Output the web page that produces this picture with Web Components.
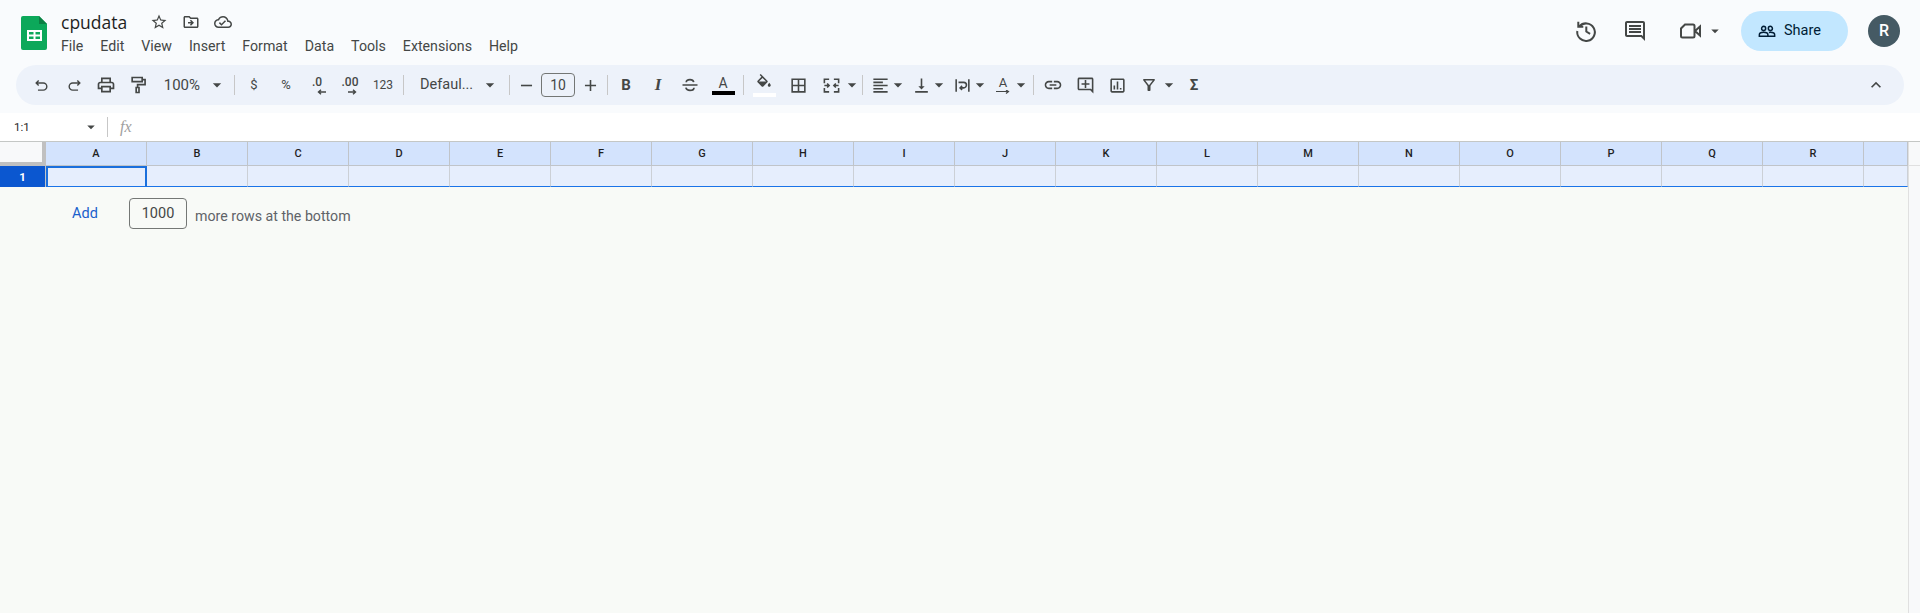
<!DOCTYPE html>
<html>
<head>
<meta charset="utf-8">
<title>cpudata</title>
<style>
html, body { margin: 0; height: 100%; overflow: hidden; }
body { background: #f9fbfd; font-family: Roboto, "Liberation Sans", sans-serif; color: #444746; display: flex; flex-direction: column; }
</style>
</head>
<body>
<gs-header title-text="cpudata">
  <gs-menu ml="0">File</gs-menu>
  <gs-menu>Edit</gs-menu>
  <gs-menu>View</gs-menu>
  <gs-menu>Insert</gs-menu>
  <gs-menu>Format</gs-menu>
  <gs-menu>Data</gs-menu>
  <gs-menu>Tools</gs-menu>
  <gs-menu>Extensions</gs-menu>
  <gs-menu>Help</gs-menu>
</gs-header>

<gs-toolbar>
  <gs-tool w="32" icon="undo" size="17"></gs-tool>
  <gs-tool w="32" ml="1" icon="redo" size="17"></gs-tool>
  <gs-tool w="32" icon="print" size="20"></gs-tool>
  <gs-tool w="32" icon="paint" size="20"></gs-tool>
  <gs-tool w="54" fs="15" align="end">100%</gs-tool>
  <gs-tool w="18" icon="caret" size="20"></gs-tool>
  <gs-sep ml="8"></gs-sep>
  <gs-tool w="24" ml="7" fs="13">$</gs-tool>
  <gs-tool w="24" ml="8" fs="13">%</gs-tool>
  <gs-tool w="24" ml="7" fs="12" weight="500" arrow="left">.0</gs-tool>
  <gs-tool w="24" ml="9" fs="12" weight="500" arrow="right">.00</gs-tool>
  <gs-tool w="28" ml="7" fs="12">123</gs-tool>
  <gs-sep ml="6"></gs-sep>
  <gs-tool w="67" ml="9" fs="14.500" align="start" pad="7">Defaul...</gs-tool>
  <gs-tool w="18" ml="1" icon="caret" size="20"></gs-tool>
  <gs-sep ml="10"></gs-sep>
  <gs-tool w="16" ml="8" icon="minus" size="19"></gs-tool>
  <gs-font-size ml="7">10</gs-font-size>
  <gs-tool w="16" ml="7" icon="plus" size="19"></gs-tool>
  <gs-sep ml="9"></gs-sep>
  <gs-tool w="24" ml="6" fs="15" weight="700">B</gs-tool>
  <gs-tool w="24" ml="8" fs="17" weight="700" italic serif>I</gs-tool>
  <gs-tool w="24" ml="8" icon="strike" size="20"></gs-tool>
  <gs-tool w="24" ml="9" fs="14" bar="#000">A</gs-tool>
  <gs-sep ml="8"></gs-sep>
  <gs-tool w="24" ml="8" icon="fill" size="18" bar="#fff"></gs-tool>
  <gs-tool w="24" ml="10" icon="borders" size="19"></gs-tool>
  <gs-tool w="24" ml="9" icon="merge" size="19"></gs-tool>
  <gs-tool w="16" ml="1" icon="caret" size="20"></gs-tool>
  <gs-sep ml="2"></gs-sep>
  <gs-tool w="24" ml="5" icon="align" size="19"></gs-tool>
  <gs-tool w="12" icon="caret" size="20"></gs-tool>
  <gs-tool w="24" ml="5" icon="valign" size="19"></gs-tool>
  <gs-tool w="12" icon="caret" size="20"></gs-tool>
  <gs-tool w="24" ml="5" icon="wrap" size="19"></gs-tool>
  <gs-tool w="12" icon="caret" size="20"></gs-tool>
  <gs-tool w="24" ml="5" fs="13" arrow="under">A</gs-tool>
  <gs-tool w="12" icon="caret" size="20"></gs-tool>
  <gs-sep ml="6"></gs-sep>
  <gs-tool w="24" ml="7" icon="link" size="20"></gs-tool>
  <gs-tool w="24" ml="8" icon="addcomment" size="19"></gs-tool>
  <gs-tool w="24" ml="8" icon="chart" size="19"></gs-tool>
  <gs-tool w="24" ml="8" icon="filter" size="18"></gs-tool>
  <gs-tool w="12" ml="2" icon="caret" size="20"></gs-tool>
  <gs-tool w="24" ml="7" fs="15" weight="700">&Sigma;</gs-tool>
  <gs-tool w="24" slot="end" icon="chevron" size="20"></gs-tool>
</gs-toolbar>

<gs-formula-bar>1:1</gs-formula-bar>
<gs-grid columns="A B C D E F G H I J K L M N O P Q R"></gs-grid>
<gs-add-rows count="1000">more rows at the bottom</gs-add-rows>

<script>
// Material style paths, 24x24 box. "s:" prefix means stroked instead of filled.
const ICONS = {
  undo: 's:M8 5 4.5 8.5 8 12M4.5 8.5H14.5a5 5 0 0 1 0 10H7',
  redo: 's:M16 5l3.5 3.5L16 12M19.5 8.5H9.5a5 5 0 0 0 0 10H17',
  print: 'M19 8h-1V3H6v5H5c-1.66 0-3 1.34-3 3v6h4v4h12v-4h4v-6c0-1.66-1.34-3-3-3zM8 5h8v3H8V5zm8 12v2H8v-4h8v2zm2-2v-2H6v2H4v-4c0-.55.45-1 1-1h14c.55 0 1 .45 1 1v4h-2z',
  paint: 's:M5 3h12v5H5zM17 5.5h3.5v6H11.5V15M9.8 15h3.4v6H9.8z',
  caret: 'M7 10l5 5 5-5z',
  minus: 'M5 11h14v2H5z',
  plus: 'M19 13h-6v6h-2v-6H5v-2h6V5h2v6h6v2z',
  strike: 's:M3 12h18M16.5 8.5C16 6.5 14.3 5.5 12 5.5S7.5 6.8 7.5 8.7M16.8 15.3c0 2-2.1 3.2-4.8 3.2s-4.500-1.200-5-3.300',
  fill: 'M16.56 8.94L7.62 0 6.21 1.41l2.38 2.38-5.15 5.15c-.59.59-.59 1.54 0 2.12l5.5 5.5c.29.29.68.44 1.06.44s.77-.15 1.06-.44l5.5-5.5c.59-.58.59-1.53 0-2.12zM5.21 10L10 5.21 14.79 10H5.21zM19 11.500s-2 2.170-2 3.500c0 1.100.9 2 2 2s2-.9 2-2c0-1.330-2-3.500-2-3.500z',
  borders: 'M3 3v18h18V3H3zm8 16H5v-6h6v6zm0-8H5V5h6v6zm8 8h-6v-6h6v6zm0-8h-6V5h6v6z',
  merge: 's:M3 9V4h6M15 4h6v5M21 15v5h-6M9 20H3v-5M3 12h6M6.500 9.500 9 12l-2.500 2.500M21 12h-6M17.500 9.500 15 12l2.500 2.500',
  align: 'M3 3h18v2H3zM3 7h12v2H3zM3 11h18v2H3zM3 15h12v2H3zM3 19h18v2H3z',
  valign: 'M16 13h-3V3h-2v10H8l4 4 4-4zM4 19v2h16v-2H4z',
  wrap: 's:M4 4v16M20 4v16M7 8h6.500a3.500 3.500 0 0 1 0 7H9M11.500 12.500 9 15l2.500 2.500',
  link: 'M3.900 12c0-1.710 1.390-3.100 3.100-3.100h4V7H7c-2.760 0-5 2.240-5 5s2.240 5 5 5h4v-1.900H7c-1.710 0-3.100-1.390-3.100-3.100zM8 13h8v-2H8v2zm9-6h-4v1.900h4c1.710 0 3.100 1.390 3.100 3.100s-1.390 3.100-3.100 3.100h-4V17h4c2.760 0 5-2.240 5-5s-2.240-5-5-5z',
  addcomment: 'M22 4c0-1.100-.9-2-2-2H4c-1.100 0-2 .9-2 2v12c0 1.100.9 2 2 2h14l4 4V4zm-2 13.170L18.830 16H4V4h16v13.170zM13 5h-2v4H7v2h4v4h2v-4h4V9h-4z',
  chart: 'M19 3H5c-1.100 0-2 .9-2 2v14c0 1.100.9 2 2 2h14c1.100 0 2-.9 2-2V5c0-1.100-.9-2-2-2zm0 16H5V5h14v14zM7 12h2v5H7zm4-5h2v10h-2zm4 8h2v2h-2z',
  filter: 'M7 6h10l-5.010 6.300L7 6zm-2.750-.39C6.270 8.200 10 13 10 13v6c0 .55.45 1 1 1h2c.55 0 1-.45 1-1v-6s3.720-4.800 5.740-7.390A.998.998 0 0 0 18.950 4H5.040a1 1 0 0 0-.79 1.610z',
  chevron: 'M7.410 15.410L12 10.830l4.590 4.580L18 14l-6-6-6 6z',
  star: 'M22 9.240l-7.190-.62L12 2 9.190 8.630 2 9.240l5.460 4.730L5.820 21 12 17.270 18.180 21l-1.630-7.030L22 9.240zM12 15.400l-3.760 2.270 1-4.280-3.320-2.880 4.380-.38L12 6.100l1.710 4.040 4.380.38-3.320 2.880 1 4.280L12 15.400z',
  move: 'M20 6h-8l-2-2H4c-1.100 0-2 .9-2 2v12c0 1.100.9 2 2 2h16c1.100 0 2-.9 2-2V8c0-1.100-.9-2-2-2zm0 12H4V6h5.170l2 2H20v10zm-8.010-9l-1.410 1.410L12.160 12H8v2h4.160l-1.590 1.590L11.990 17 16 13.010 11.990 9z',
  cloud: 'M19.350 10.040C18.670 6.590 15.640 4 12 4 9.110 4 6.600 5.640 5.350 8.040 2.340 8.360 0 10.910 0 14c0 3.310 2.690 6 6 6h13c2.760 0 5-2.240 5-5 0-2.640-2.050-4.780-4.650-4.960zM19 18H6c-2.210 0-4-1.790-4-4 0-2.050 1.530-3.760 3.560-3.970l1.070-.11.5-.95C8.080 7.140 9.940 6 12 6c2.620 0 4.880 1.860 5.390 4.430l.3 1.500 1.530.11c1.560.1 2.780 1.410 2.780 2.960 0 1.650-1.350 3-3 3zm-9-3.820l-2.090-2.090L6.500 13.500 10 17l6.010-6.010-1.410-1.410z',
  history: 's:M5.300 7.500A8.800 8.800 0 1 1 3.300 12M4.300 2.800v5h5M12.300 7.500v5l3.800 2.300',
  comment: 'M21.990 4c0-1.100-.89-2-1.990-2H4c-1.100 0-2 .9-2 2v12c0 1.100.9 2 2 2h14l4 4-.01-18zM20 4v13.170L18.830 16H4V4h16zM6 12h12v2H6zm0-3h12v2H6zm0-3h12v2H6z',
  meet: 's:M7 5.500H15a1.500 1.500 0 0 1 1.500 1.500V17a1.500 1.500 0 0 1-1.500 1.500H4.500A1.500 1.500 0 0 1 3 17V9.500zM17 12l5-4.500v9z',
  people: 's:M1.800 19v-2c0-2 3-3.200 5.700-3.200s5.700 1.200 5.700 3.200v2zM14.500 14c.6-.2 1.300-.2 2-.2 2.700 0 5.700 1.200 5.700 3.200v2h-9M7.500 5.800a2.700 2.700 0 1 0 0 5.400 2.700 2.700 0 0 0 0-5.400zM16.500 5.800a2.700 2.700 0 1 1 0 5.400 2.700 2.700 0 0 1 0-5.400z'
};

function svg(name, size, color) {
  let d = ICONS[name];
  const stroked = d.startsWith('s:');
  if (stroked) d = d.slice(2);
  const paint = stroked
    ? `fill="none" stroke="${color}" stroke-width="2"`
    : `fill="${color}"`;
  return `<svg width="${size}" height="${size}" viewBox="0 0 24 24" style="display:block;flex:none"><path d="${d}" ${paint}/></svg>`;
}

class GsMenu extends HTMLElement {
  constructor() {
    super();
    this.attachShadow({mode: 'open'}).innerHTML = `
<style>
:host { display: block; font-size: 14.200px; line-height: 20px; color: #444746; margin-left: 17px; }
:host([ml="0"]) { margin-left: 0; }
</style><slot></slot>`;
  }
}

class GsHeader extends HTMLElement {
  constructor() {
    super();
    const root = this.attachShadow({mode: 'open'});
    root.innerHTML = `
<style>
:host { display: flex; height: 65px; flex: none; padding-left: 21px; box-sizing: border-box; }
.logo { margin-top: 16px; flex: none; }
.doc { margin-left: 14px; padding-top: 10px; }
.title-row { display: flex; align-items: center; height: 24px; }
.title { font-family: "Open Sans", Roboto, sans-serif; font-size: 17.500px; color: #1f1f1f; line-height: 24px; width: 66px; white-space: nowrap; }
.ic { margin-left: 23px; }
.ic + .ic { margin-left: 14px; }
.menu { display: flex; margin-top: 2px; }
.right { margin-left: auto; display: flex; align-items: center; height: 61px; padding-right: 20px; }
.share { display: flex; align-items: center; width: 107px; height: 40px; margin-left: 17px; box-sizing: border-box; padding-left: 17px;
  background: #c2e7ff; border-radius: 20px; color: #001d35; font-size: 14.500px; gap: 8px; }
.avatar { width: 32px; height: 32px; margin-left: 20px; border-radius: 50%; background: #455a64; color: #fff; display: flex; align-items: center; justify-content: center; font-size: 16px; font-weight: 500; }
.h1 { margin-right: 25px; }
.h2 { margin-right: 31px; }
.m2 { margin-left: 4px; }
</style>
<svg class="logo" width="26" height="34" viewBox="0 0 26 34">
  <path d="M2 0h16l8 8v24a2 2 0 0 1-2 2H2a2 2 0 0 1-2-2V2a2 2 0 0 1 2-2z" fill="#0ca85a"/>
  <path d="M18 0l8 8h-8z" fill="#0b8043"/>
  <path d="M6 14h15v11H6z M8 16v2.500h4.500V16z M14.500 16v2.500H19V16z M8 20.500V23h4.500v-2.500z M14.500 20.500V23H19v-2.500z" fill="#fff" fill-rule="evenodd"/>
</svg>
<div class="doc">
  <div class="title-row">
    <span class="title"></span>
    <span class="ic">${svg('star', 18, '#444746')}</span>
    <span class="ic">${svg('move', 18, '#444746')}</span>
    <span class="ic">${svg('cloud', 18, '#444746')}</span>
  </div>
  <div class="menu"><slot></slot></div>
</div>
<div class="right">
  <span class="h1">${svg('history', 24, '#444746')}</span>
  <span class="h2">${svg('comment', 24, '#444746')}</span>
  <span>${svg('meet', 24, '#444746')}</span>
  <span class="m2">${svg('caret', 18, '#444746')}</span>
  <div class="share">${svg('people', 18, '#001d35')}<span>Share</span></div>
  <div class="avatar">R</div>
</div>`;
    root.querySelector('.title').textContent = this.getAttribute('title-text');
  }
}

class GsToolbar extends HTMLElement {
  constructor() {
    super();
    this.attachShadow({mode: 'open'}).innerHTML = `
<style>
:host { display: flex; align-items: center; flex: none; height: 40px; margin: 0 16px; padding: 0 16px 0 9px; background: #edf2fa; border-radius: 20px; }
.end { margin-left: auto; display: flex; }
</style><slot></slot><div class="end"><slot name="end"></slot></div>`;
  }
}

class GsSep extends HTMLElement {
  constructor() {
    super();
    this.attachShadow({mode: 'open'}).innerHTML = `
<style>
:host { display: block; width: 1px; height: 20px; background: #c7c7c7; flex: none; }
</style>`;
    this.style.marginLeft = (this.getAttribute('ml') || 0) + 'px';
  }
}

class GsFontSize extends HTMLElement {
  constructor() {
    super();
    this.attachShadow({mode: 'open'}).innerHTML = `
<style>
:host { display: flex; align-items: center; justify-content: center; flex: none; box-sizing: border-box; width: 34px; height: 24px; border: 1px solid #747775; border-radius: 4px; font-size: 14px; color: #444746; }
</style><slot></slot>`;
    this.style.marginLeft = (this.getAttribute('ml') || 0) + 'px';
  }
}

class GsTool extends HTMLElement {
  constructor() {
    super();
    const a = n => this.getAttribute(n);
    const icon = a('icon') ? svg(a('icon'), a('size') || 18, '#444746') : '';
    const bar = a('bar') ? `<i class="bar" style="background:${a('bar')}"></i>` : '';
    let arrow = '';
    if (a('arrow') === 'left') arrow = '<svg width="10" height="6" viewBox="0 0 10 6" style="display:block;margin:0 0 0 8px"><path d="M10 3H3M5 .8 2.500 3 5 5.200" fill="none" stroke="#444746" stroke-width="1.400"/></svg>';
    if (a('arrow') === 'right') arrow = '<svg width="10" height="6" viewBox="0 0 10 6" style="display:block;margin:0 0 0 6px"><path d="M0 3h7M5 .8 7.500 3 5 5.200" fill="none" stroke="#444746" stroke-width="1.400"/></svg>';
    if (a('arrow') === 'under') arrow = '<svg width="14" height="5" viewBox="0 0 14 5" style="display:block"><path d="M0 1.500h12M10 0 12.500 1.500 10 3.500" fill="none" stroke="#444746" stroke-width="1.200"/></svg>';
    this.attachShadow({mode: 'open'}).innerHTML = `
<style>
:host { display: flex; flex-direction: column; align-items: center; justify-content: center; flex: none; box-sizing: border-box; height: 32px; color: #444746; }
.t { display: block; line-height: 14px; white-space: nowrap; }
.bar { display: block; width: 23px; height: 4px; margin-top: 1px; }
</style>${icon}<span class="t"><slot></slot></span>${arrow}${bar}`;
    this.style.width = a('w') + 'px';
    if (a('ml')) this.style.marginLeft = a('ml') + 'px';
    if (a('fs')) this.style.fontSize = a('fs') + 'px';
    if (a('weight')) this.style.fontWeight = a('weight');
    if (this.hasAttribute('italic')) this.style.fontStyle = 'italic';
    if (this.hasAttribute('serif')) this.style.fontFamily = '"Liberation Serif", serif';
    if (a('align')) this.style.alignItems = 'flex-' + a('align');
    if (a('pad')) this.style.paddingLeft = a('pad') + 'px';
    if (a('align') === 'end') this.style.paddingRight = '8px';
  }
}

class GsFormulaBar extends HTMLElement {
  constructor() {
    super();
    this.attachShadow({mode: 'open'}).innerHTML = `
<style>
:host { display: flex; align-items: center; flex: none; height: 28px; margin-top: 8px; background: #fff; font-size: 11.500px; }
.name { width: 68px; margin-left: 14px; color: #1f1f1f; }
.sep { width: 1px; height: 20px; background: #c7c7c7; margin-left: 7px; }
.fx { margin-left: 12px; font: italic 16px "Liberation Serif", serif; color: #a0a0a0; }
</style>
<span class="name"><slot></slot></span>
${svg('caret', 18, '#444746')}
<span class="sep"></span>
<span class="fx">fx</span>`;
  }
}

class GsGrid extends HTMLElement {
  constructor() {
    super();
    const cols = this.getAttribute('columns').split(' ');
    const head = cols.concat('').map(c => `<div class="h">${c}</div>`).join('');
    const cells = cols.concat('').map((c, i) => `<div class="c${i === 0 ? ' sel' : ''}"></div>`).join('');
    this.attachShadow({mode: 'open'}).innerHTML = `
<style>
:host { display: grid; flex: none; grid-template-columns: 46px repeat(18, 101px) 44px 12px; grid-template-rows: 24px 21px; background: #fff;
  font: 500 11px Roboto, sans-serif; color: #1f1f1f; border-top: 1px solid #c4c7c5; }
.corner { background: #f8f9fa; border-right: 4px solid #c0c0c0; border-bottom: 4px solid #c0c0c0; box-sizing: border-box; }
.h { background: #d3e3fd; border-right: 1px solid #c0c4c9; border-bottom: 1px solid #c0c4c9; display: flex; align-items: center; justify-content: center; box-sizing: border-box; }
.row { background: #0b57d0; color: #fff; font-weight: 700; font-size: 11.500px; display: flex; align-items: center; justify-content: center; border-right: 1px solid #c0c4c9; box-sizing: border-box; }
.c { background: #e6eefd; border-right: 1px solid #ccd0d6; border-bottom: 1px solid #1a73e8; box-sizing: border-box; }
.sel { border: 2px solid #1a6fdc; border-bottom: 1px solid #1a73e8; }
.gut { background: #f8f9fa; border-left: 1px solid #e0e0e0; border-bottom: 1px solid #e0e0e0; box-sizing: border-box; }
</style>
<div class="corner"></div>${head}<div class="gut"></div>
<div class="row">1</div>${cells}<div class="gut" style="border-bottom:0"></div>`;
  }
}

class GsAddRows extends HTMLElement {
  constructor() {
    super();
    const root = this.attachShadow({mode: 'open'});
    root.innerHTML = `
<style>
:host { display: block; flex: 1; background: #f8faf7; position: relative; }
.row { display: flex; align-items: flex-start; padding: 11px 0 0 72px; }
.add { font-size: 14.500px; color: #1a5fcc; line-height: 20px; margin-top: 6px; width: 57px; }
.count { box-sizing: border-box; width: 58px; height: 31px; border: 1px solid #747775; border-radius: 4px; display: flex; align-items: center; justify-content: center; font-size: 14.500px; color: #444746; }
.msg { font-size: 14.200px; color: #5f6368; margin: 8px 0 0 8px; line-height: 20px; }
.gut { position: absolute; top: 0; bottom: 0; right: 0; width: 11px; background: #f8f9fa; border-left: 1px solid #e0e0e0; }
</style>
<div class="row">
  <span class="add">Add</span>
  <span class="count"></span>
  <span class="msg"><slot></slot></span>
</div>
<div class="gut"></div>`;
    root.querySelector('.count').textContent = this.getAttribute('count');
  }
}

customElements.define('gs-menu', GsMenu);
customElements.define('gs-header', GsHeader);
customElements.define('gs-toolbar', GsToolbar);
customElements.define('gs-sep', GsSep);
customElements.define('gs-font-size', GsFontSize);
customElements.define('gs-tool', GsTool);
customElements.define('gs-formula-bar', GsFormulaBar);
customElements.define('gs-grid', GsGrid);
customElements.define('gs-add-rows', GsAddRows);
</script>
</body>
</html>
